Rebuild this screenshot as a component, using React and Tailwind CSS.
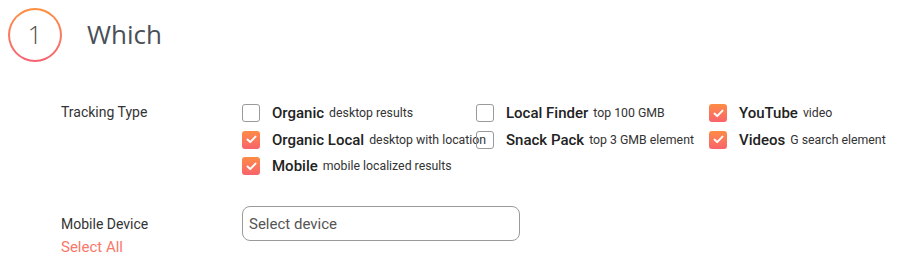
import React from "react";

const options = [
  { label: "Organic", sub: "desktop results", checked: false },
  { label: "Local Finder", sub: "top 100 GMB", checked: false },
  { label: "YouTube", sub: "video", checked: true },
  { label: "Organic Local", sub: "desktop with location", checked: true },
  { label: "Snack Pack", sub: "top 3 GMB element", checked: false },
  { label: "Videos", sub: "G search element", checked: true },
  { label: "Mobile", sub: "mobile localized results", checked: true },
];

const Check = ({ checked }) =>
  checked ? (
    <span className="w-[18px] h-[18px] shrink-0 rounded-[3px] bg-gradient-to-b from-[#fd8b43] to-[#f8636b] flex items-center justify-center">
      <svg width="11" height="9" viewBox="0 0 11 9" fill="none">
        <path d="M1.5 4.6 L4.2 7.1 L9.5 1.6" stroke="white" strokeWidth="2" strokeLinecap="round" strokeLinejoin="round" />
      </svg>
    </span>
  ) : (
    <span className="w-[18px] h-[18px] shrink-0 rounded-[3px] border border-[#9a9a9a] bg-transparent"></span>
  );

export default function App() {
  return (
    <div className="w-[904px] h-[280px] bg-white font-['Roboto',sans-serif] text-[#333]">
      <div className="flex items-center pt-[8px] pl-[8px]">
        <div className="w-[54px] h-[54px] rounded-full bg-gradient-to-b from-[#fd903e] to-[#f76173] p-[2px]">
          <div className="w-full h-full rounded-full bg-white flex items-center justify-center text-[25px] text-[#4d4d4d] font-['Open_Sans',sans-serif] font-light">
            1
          </div>
        </div>
        <div className="ml-[25px] text-[26px] leading-[34px] text-[#4a4f57] font-['Open_Sans',sans-serif] -mt-[2px]">Which</div>
      </div>

      <div className="flex mt-[38px] pl-[61px]">
        <div className="w-[181px] text-[14px] leading-[20px] pt-[2px]">Tracking Type</div>
        <div className="grid grid-cols-[234px_233px_180px] auto-rows-[26.5px]">
          {options.map((o) => (
            <div key={o.label} className="flex items-center whitespace-nowrap h-[26.5px]">
              <Check checked={o.checked} />
              <span className="ml-[12px] text-[15px] font-medium text-[#222]">{o.label}</span>
              <span className="ml-[5px] text-[12.3px] text-[#333]">{o.sub}</span>
            </div>
          ))}
        </div>
      </div>

      <div className="flex mt-[26px] pl-[61px]">
        <div className="w-[181px] pt-[8px]">
          <div className="text-[14px] leading-[20px]">Mobile Device</div>
          <div className="text-[15px] leading-[20px] mt-[3px] text-[#f8776a]">Select All</div>
        </div>
        <div className="w-[278px] h-[35px] rounded-[8px] border border-[#9a9a9a] flex items-center px-[6px] pt-[2px] text-[15px] text-[#555]">
          Select device
        </div>
      </div>
    </div>
  );
}
